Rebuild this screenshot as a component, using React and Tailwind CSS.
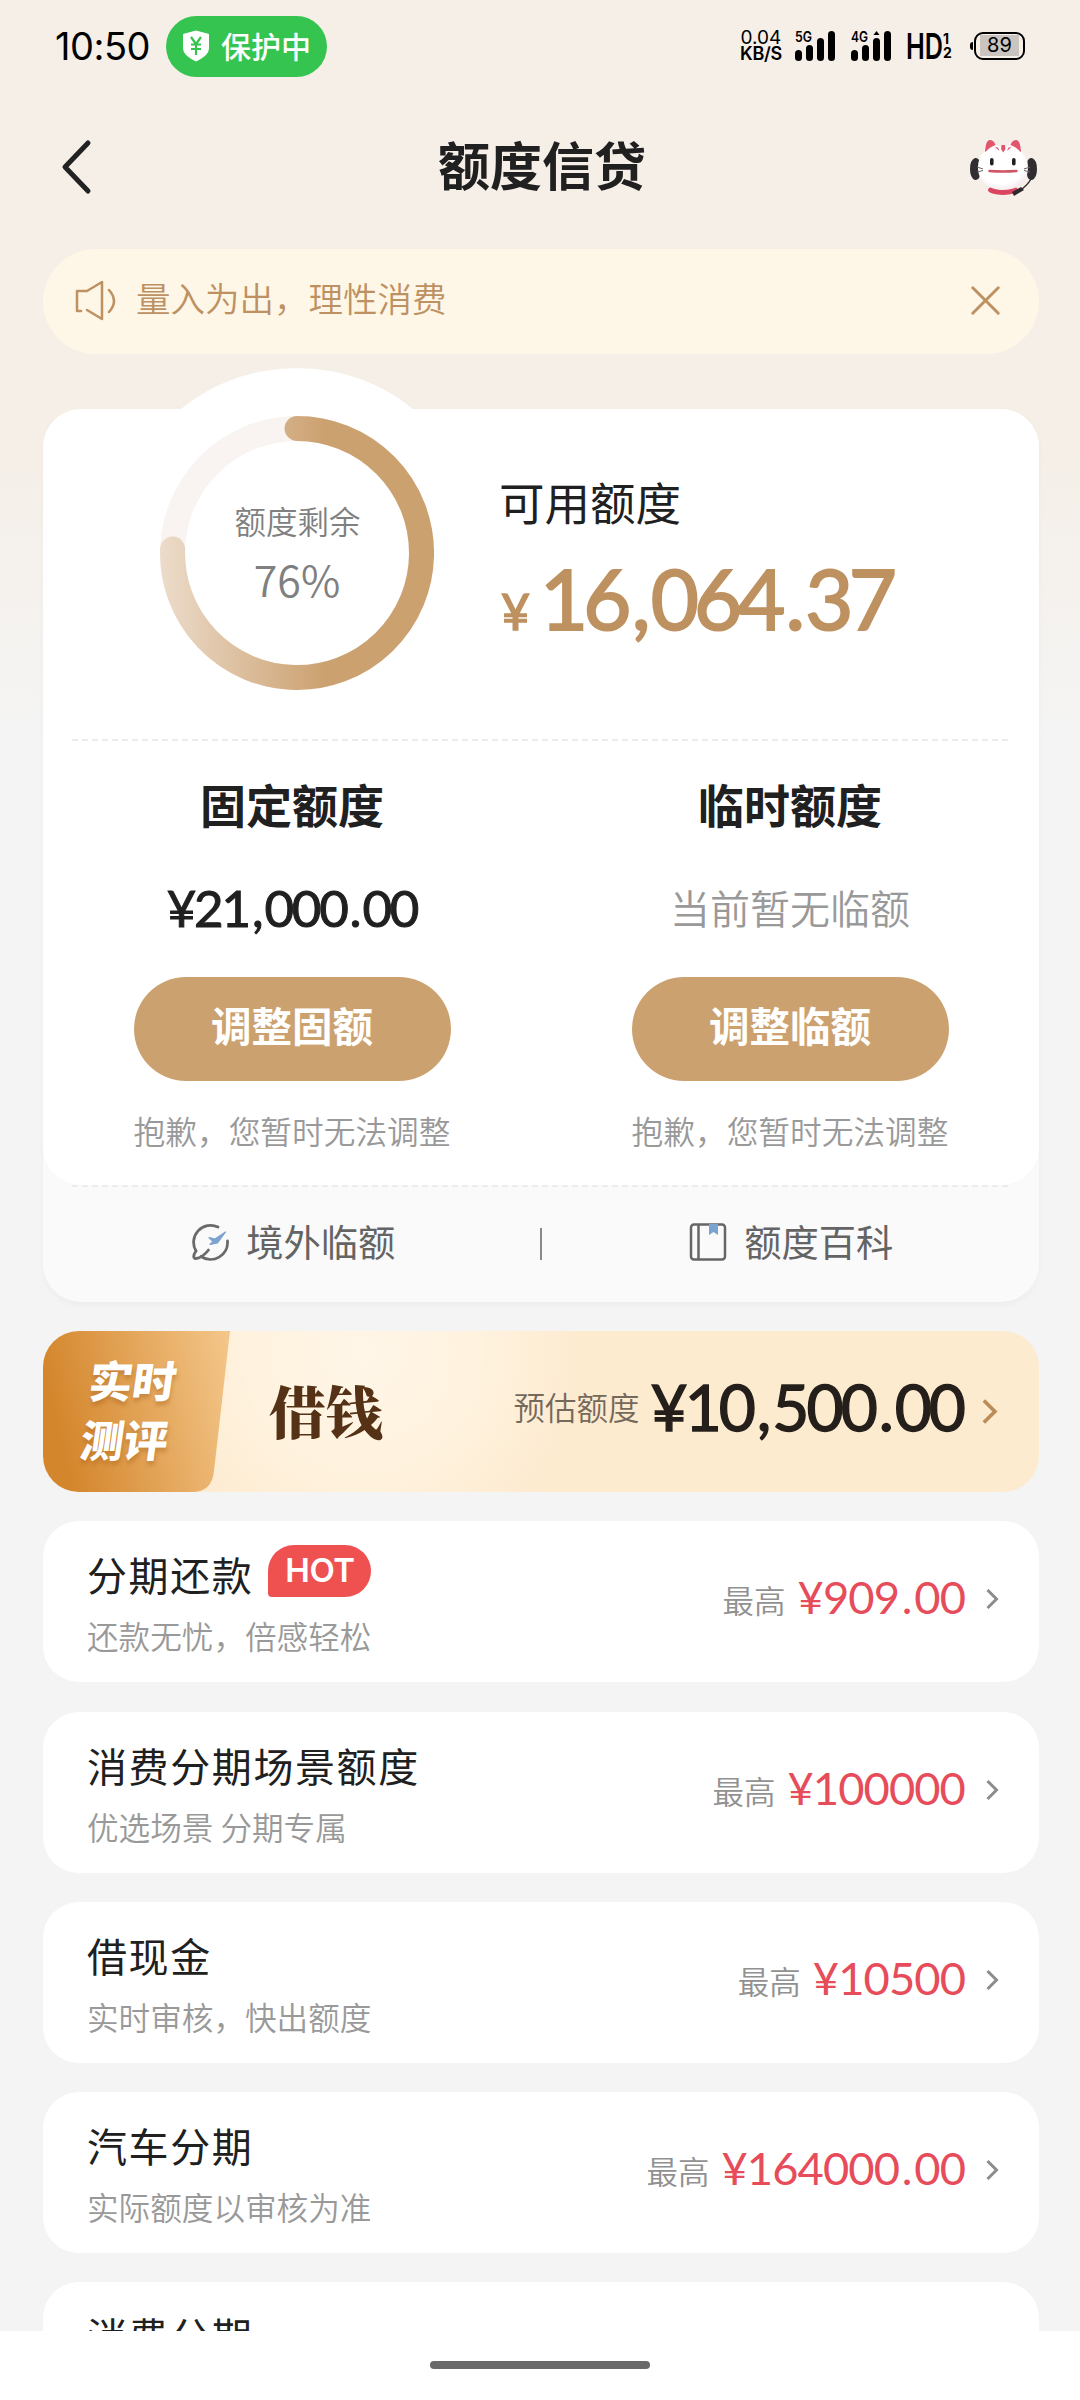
import { FiX } from "react-icons/fi";
import clsx from "clsx";

const rows = [
  { title: "分期还款", sub: "还款无忧，倍感轻松", amount: "909.00", hot: true },
  { title: "消费分期场景额度", sub: "优选场景 分期专属", amount: "100000" },
  { title: "借现金", sub: "实时审核，快出额度", amount: "10500" },
  { title: "汽车分期", sub: "实际额度以审核为准", amount: "164000.00" },
  { title: "消费分期", sub: "", amount: "" },
];

// Tight digits, with some air around the separators
const Amount = ({ value, className }) => (
  <span className={clsx("font-['Lato'] [font-kerning:none]", className)}>
    {value.split(/([.,])/).map((part, i) => (
      <span key={i} className={i % 2 ? "mx-[0.06em]" : undefined}>
        {part}
      </span>
    ))}
  </span>
);

const Signal = ({ label }) => (
  <svg className="overflow-visible" width="41" height="32" viewBox="0 0 41 32">
    <text x="0" y="12" fontSize="14" fontWeight="600" textLength="17" lengthAdjust="spacingAndGlyphs">
      {label}
    </text>
    <rect x="0" y="20" width="7" height="11" rx="3.5" />
    <rect x="11" y="15" width="7" height="16" rx="3.5" />
    <rect x="22" y="8" width="7" height="23" rx="3.5" />
    <rect x="33" y="1" width="7" height="30" rx="3.5" />
    {label === "4G" && <path d="M22.5 5l3-4 3 4z" />}
  </svg>
);

const StatusBar = () => (
  <div className="flex h-[92px] shrink-0 items-start justify-between pt-[15px] pr-[55px] pl-[55px] text-black">
    <div className="flex items-center gap-[15px]">
      <span className="w-24 font-['Inter'] text-[38px] leading-[62px] tracking-[-0.5px]">10:50</span>
      <div className="flex h-[61px] w-[161px] items-center gap-[11px] rounded-full bg-[#35c44f] pl-4 text-white">
        <svg width="28" height="32" viewBox="0 0 28 32">
          <path d="M14 0.5 27 4v14c0 6-6 10-13 13.5C7 28 1 24 1 18V4z" fill="#fff" />
          <path d="M9 7l5 7 5-7M14 14v11M9 14.5h10M9 19h10" fill="none" stroke="#35c44f" strokeWidth="2.2" />
        </svg>
        <span className="pb-[2px] text-[30px] font-medium leading-none">保护中</span>
      </div>
    </div>
    <div className="flex h-[61px] items-center font-['Inter']">
      <div className="flex w-[46px] flex-col items-center text-[19px] leading-[16px]">
        <span>0.04</span>
        <span className="text-[18px] font-semibold leading-[15px] tracking-[-0.3px]">KB/S</span>
      </div>
      <div className="ml-[11px] flex gap-[15px]">
        <Signal label="5G" />
        <Signal label="4G" />
      </div>
      <div className="ml-[14px] flex h-[32px] items-center">
        <span className="w-[37px] origin-left scale-x-[0.7] text-[36px] font-semibold leading-[32px]">HD</span>
        <span className="flex w-[9px] flex-col text-[14px] font-bold leading-[14px]">
          <span>1</span>
          <span>2</span>
        </span>
      </div>
      <div className="ml-[18px] flex items-center">
        <span className="h-2 w-[3px] rounded-l-full bg-black" />
        <span className="ml-px flex h-[28px] w-[51px] items-center justify-center rounded-[9px] border-[2.5px] border-black">
          <span className="flex h-[21px] w-[39px] items-center justify-center bg-[#c9c4c0] text-[20px] leading-[21px]">89</span>
        </span>
      </div>
    </div>
  </div>
);

const Mascot = () => (
  <svg width="67" height="60" viewBox="0 0 67 60">
    <defs>
      <radialGradient id="face" cx="0.45" cy="0.4" r="0.65">
        <stop offset="0.7" stopColor="#fff" />
        <stop offset="1" stopColor="#f1e7e8" />
      </radialGradient>
    </defs>
    <path d="M5 21q6-1 5 11 1 12-5 11-5-2-5-11t5-11z" fill="#2f2d2f" />
    <path d="M62 21q-6-1-5 11-1 12 5 11 5-2 5-11t-5-11z" fill="#2f2d2f" />
    <ellipse cx="33" cy="53" rx="15" ry="5" fill="#dc4560" />
    <path d="M14 20q-1-18 5-18 6 0 10 9zM52 20q1-18-5-18-6 0-10 9z" fill="#fbeff0" />
    <path d="M33 9c17 0 25 9 25 21.500S49 53 33 53 8 43 8 30.500 16 9 33 9z" fill="url(#face)" />
    <path d="M15 14q1-11 4.500-11 4.500 0 6 5-6 2-10 7zM51 14q-1-11-4.500-11-4.500 0-6 5 6 2 10 7z" fill="#e2566c" />
    <path d="M31.500 8h3.500l.5 4-2.200 3.500L31 12zM25 10l3 .5 1.500 3.500zM41.500 10l-3 .5-1.500 3.500z" fill="#e2566c" />
    <rect x="20" y="21" width="3.600" height="7.500" rx="1.800" fill="#222" />
    <rect x="42" y="21" width="3.600" height="7.500" rx="1.800" fill="#222" />
    <path d="M19.500 34q13 1 27 0" stroke="#cf5566" strokeWidth="2.400" fill="none" strokeLinecap="round" />
    <path d="M7 30l6 2M7 35l6-1.500M60 30l-6 2M60 35l-6-1.500" stroke="#666" strokeWidth="1" />
    <path d="M61 42q-4 7-12 12" stroke="#2c2a2c" strokeWidth="1.500" fill="none" />
    <path d="M42 55l9-5 3 3-10 6z" fill="#2c2a2c" />
  </svg>
);

const Ring = () => (
  <svg className="absolute inset-0" width="274" height="274" viewBox="0 0 274 274">
    <defs>
      <linearGradient id="ring" x1="0" y1="0" x2="274" y2="0" gradientUnits="userSpaceOnUse">
        <stop offset="0" stopColor="#ecdccb" />
        <stop offset="0.6" stopColor="#cca170" />
      </linearGradient>
    </defs>
    <circle cx="137" cy="137" r="124.5" fill="none" stroke="#f9f4f1" strokeWidth="25" />
    <path
      d="M137 12.500A124.500 124.500 0 1 1 12.600 133"
      fill="none"
      stroke="url(#ring)"
      strokeWidth="25"
      strokeLinecap="round"
    />
  </svg>
);

const Chevron = ({ className, width, height }) => (
  <svg className={className} width={width} height={height} viewBox="0 0 14 22">
    <path d="M2 2l9 9-9 9" fill="none" stroke="currentColor" strokeWidth="3" />
  </svg>
);

const LimitColumn = ({ title, children, button }) => (
  <div className="flex flex-1 flex-col items-center">
    <h2 className="text-[46px] font-bold leading-[64px] text-[#202020]">{title}</h2>
    <div className="mt-[44px] flex h-[56px] items-center">{children}</div>
    <button className="mt-[42px] h-[104px] w-[317px] rounded-full bg-[#cca170] pb-[8px] text-[40.5px] font-bold text-white">
      {button}
    </button>
    <p className="mt-[26px] text-[31.7px] font-[350] leading-[46px] text-[#999]">抱歉，您暂时无法调整</p>
  </div>
);

const Dashes = () => (
  <svg className="block h-[2px] w-full" preserveAspectRatio="none">
    <line x1="0" y1="1" x2="938" y2="1" stroke="#ececec" strokeWidth="2" strokeDasharray="6 4" />
  </svg>
);

const LimitCard = () => (
  <section className="relative mt-[55px] h-[893px] shrink-0 rounded-[38px] bg-[#fafafa] shadow-[0_3px_6px_rgba(0,0,0,0.03)]">
    <div className="absolute top-[-41px] left-[69px] size-[370px] rounded-full bg-white" />
    <div className="relative h-[776px] rounded-[38px] bg-white px-[29px]">
      <div className="flex h-[330px]">
        <div className="relative mt-[7px] ml-[88px] flex size-[274px] flex-col items-center text-[#808080]">
          <Ring />
          <span className="mt-[81px] pl-px text-[31.5px] font-[350] leading-[46px]">额度剩余</span>
          <span className="mt-[4px] text-[43px] font-[350] leading-[62px]">76%</span>
        </div>
        <div className="ml-[65px] pt-[59px]">
          <div className="text-[45.5px] leading-[66px] text-[#202020]">可用额度</div>
          <div className="mt-[24px] flex items-baseline text-[#be9160]">
            <span className="w-[41px] pl-[2px] font-['Lato'] text-[50px] leading-[80px] [-webkit-text-stroke:1.5px]">¥</span>
            <Amount
              value="16,064.37"
              className="text-[83px] leading-[80px] tracking-[-0.058em] [-webkit-text-stroke:2px]"
            />
          </div>
        </div>
      </div>
      <Dashes />
      <div className="-mx-[29px] flex pt-[30px]">
        <LimitColumn title="固定额度" button="调整固额">
          <Amount
            value="¥21,000.00"
            className="text-[51px] leading-none tracking-[-0.043em] text-[#202020] [-webkit-text-stroke:1px]"
          />
        </LimitColumn>
        <LimitColumn title="临时额度" button="调整临额">
          <span className="text-[40px] font-[350] text-[#999]">当前暂无临额</span>
        </LimitColumn>
      </div>
    </div>
    <div className="px-[29px]">
      <Dashes />
    </div>
    <div className="flex h-[114px] items-center text-[37.3px] leading-none text-[#646464]">
      <div className="flex flex-1 items-center justify-center gap-[16px] pb-[3px] pl-[3px]">
        <svg width="38" height="38" viewBox="0 0 38 38" fill="none" stroke="#6a6a6a" strokeWidth="2.8" strokeLinecap="round">
          <path d="M26 4A17 17 0 0 0 4 28M35.500 18A17 17 0 0 1 9 33.500" />
          <path d="M4 28c-3 4-3 8 0 7.500 4-.5 9-4 12.500-8.500" />
          <path d="M17 14.500l6 1.500 10.500-7-8 11-7.500 1.500 3-3z" fill="#7ba3d0" stroke="#7ba3d0" strokeWidth="1.2" strokeLinejoin="round" />
        </svg>
        <span className="pb-[2px]">境外临额</span>
      </div>
      <span className="-ml-[2px] h-[32px] w-[2px] bg-[#888]" />
      <div className="flex flex-1 items-center justify-center gap-[17px] pb-[3px] pl-[2px]">
        <svg width="38" height="38" viewBox="0 0 38 38" fill="none" stroke="#666" strokeWidth="2.5">
          <rect x="2" y="1.500" width="34" height="35" rx="3" />
          <path d="M9.500 2v34" />
          <path d="M20 1h9v11l-4.500-3-4.500 3z" fill="#7ba3d0" stroke="none" />
        </svg>
        <span className="pb-[2px]">额度百科</span>
      </div>
    </div>
  </section>
);

const LoanBanner = () => (
  <section className="relative flex h-[161px] shrink-0 items-center overflow-hidden rounded-[36px] bg-[#fdebd0] bg-[radial-gradient(circle_at_320px_20px,#fff6e8_0,#fff3e0_100px,#fdebd0_220px)]">
    <svg className="absolute top-0 left-0" width="188" height="161" viewBox="0 0 188 161">
      <defs>
        <linearGradient id="tag" x1="0" y1="0.2" x2="1" y2="0">
          <stop offset="0" stopColor="#d4862c" />
          <stop offset="1" stopColor="#f4c78b" />
        </linearGradient>
      </defs>
      <path d="M0 0h187l-16 140q-2 21-22 21H0z" fill="url(#tag)" />
    </svg>
    <div className="relative w-[187px] -skew-x-[8deg] pr-[16px] pb-[5px] text-center text-[43.5px] font-black leading-[59px] text-white [text-shadow:1px_4px_4px_rgba(160,90,20,0.4)]">
      <div>实时</div>
      <div>测评</div>
    </div>
    <span className="ml-[39px] pb-[5px] font-['Noto_Serif_CJK_SC','Noto_Sans_CJK_SC',serif] text-[57px] font-black leading-none text-[#553216]">
      借钱
    </span>
    <div className="ml-auto flex items-center pb-[9px]">
      <span className="text-[31.5px] font-[350] text-[#75695c]">预估额度</span>
      <Amount
        value="¥10,500.00"
        className="ml-[11px] text-[64px] leading-none tracking-[-0.046em] text-[#241f1a] [-webkit-text-stroke:1.4px]"
      />
      <Chevron className="mt-[8px] ml-[18px] mr-[40px] text-[#bb8b58]" width="18" height="27" />
    </div>
  </section>
);

const Row = ({ title, sub, amount, hot }) => (
  <section className="flex h-[161px] shrink-0 items-start justify-between rounded-[36px] bg-white pr-[39px] pl-[44px]">
    <div className="pt-[23px]">
      <div className="flex items-start text-[40px] leading-[60px] tracking-[1.6px] text-[#202020]">
        {title}
        {hot && (
          <span className="mt-[1px] ml-[15px] h-[52px] w-[103px] rounded-[26px] rounded-bl-[4px] bg-[#ef5151] text-center font-['Inter'] text-[33px] font-semibold leading-[50px] tracking-[-0.5px] text-white">
            HOT
          </span>
        )}
      </div>
      <div className="mt-[8px] text-[31.6px] font-[350] leading-[46px] text-[#999]">{sub}</div>
    </div>
    {amount && (
      <div className="flex items-center pt-[46px] leading-[56px]">
        <span className="pt-[4px] text-[31.5px] font-[350] text-[#919191]">最高</span>
        <Amount value={`¥${amount}`} className="ml-[12px] text-[45.3px] tracking-[-0.02em] text-[#e64c5a]" />
        <Chevron className="mt-[4px] ml-[20px] text-[#8c8c8c]" width="15" height="22" />
      </div>
    )}
  </section>
);

const App = () => (
  <main className="flex h-[2400px] w-[1080px] flex-col overflow-hidden bg-[#f4f4f4] bg-[linear-gradient(#f5efe8_0,#f5efe8_460px,#f4f4f4_740px)] font-['Noto_Sans_CJK_SC',sans-serif]">
    <StatusBar />
    <header className="flex h-[157px] shrink-0 items-center justify-between pr-[43px] pb-[8px] pl-[60px]">
      <svg width="54" height="56" viewBox="0 0 54 56">
        <path d="M28 4 5 28l23 24" fill="none" stroke="#222" strokeWidth="5" strokeLinecap="round" strokeLinejoin="round" />
      </svg>
      <h1 className="pb-[6px] text-[52px] font-bold leading-none text-[#202020]">额度信贷</h1>
      <Mascot />
    </header>

    <div className="flex min-h-0 flex-1 flex-col overflow-hidden pr-[41px] pl-[43px]">
      <div className="flex h-[105px] shrink-0 items-center rounded-full bg-[#fef7e7] pr-[28px] pb-[2px] pl-[31px] text-[#bd9162]">
        <svg width="44" height="42" viewBox="0 0 44 42" fill="none" stroke="currentColor" strokeWidth="2.5" strokeLinecap="round" strokeLinejoin="round">
          <path d="M7 31H3V11h10L28 2v37L13 30" />
          <path d="M35 10q10 11 0 22" />
        </svg>
        <span className="ml-[18px] pb-[5px] text-[34.5px] font-[350]">量入为出，理性消费</span>
        <FiX className="ml-auto" size={51} strokeWidth={1.4} />
      </div>
      <LimitCard />
      <div className="mt-[29px] flex flex-col gap-[29.3px]">
        <LoanBanner />
        {rows.map((row) => (
          <Row key={row.title} {...row} />
        ))}
      </div>
    </div>

    <footer className="flex h-[69px] shrink-0 justify-center bg-white pt-[30px]">
      <span className="h-2 w-[220px] rounded-full bg-[#6a6a6a]" />
    </footer>
  </main>
);

export default App;
